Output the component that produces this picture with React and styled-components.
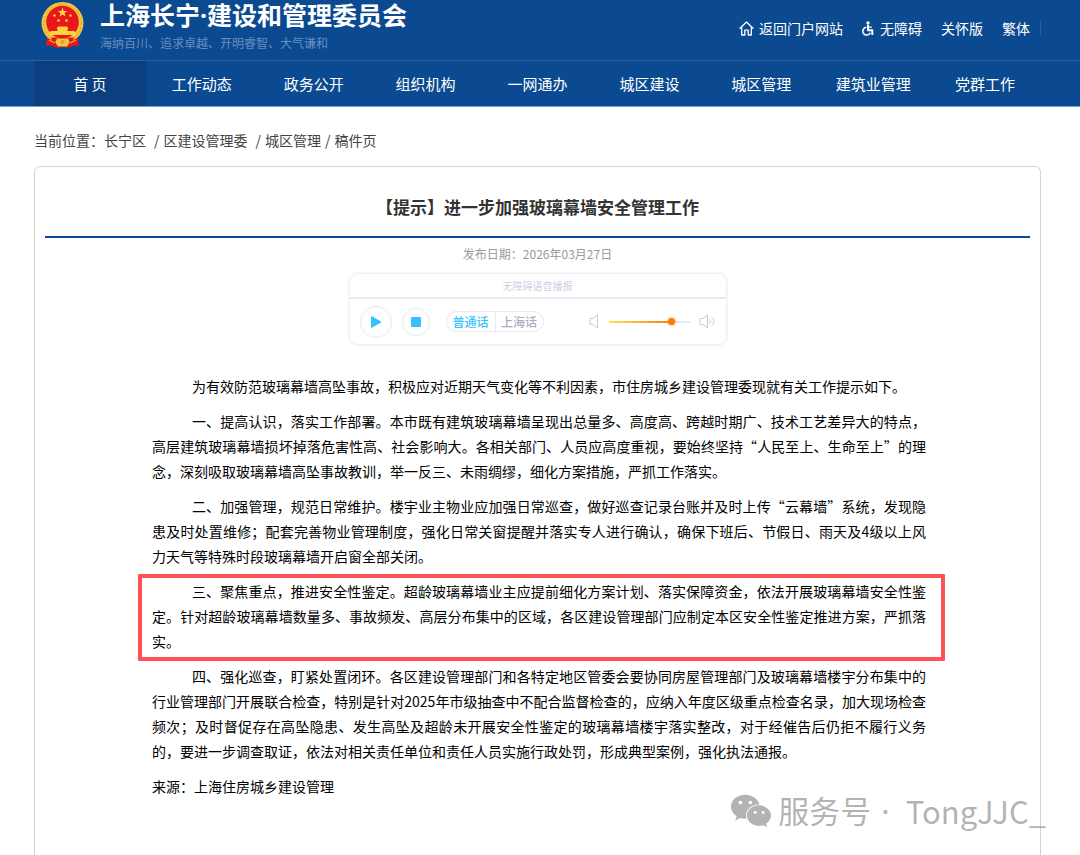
import React, { useState } from 'react'
import styled, { createGlobalStyle, ThemeProvider } from 'styled-components'
import { FaWeixin } from 'react-icons/fa'

const theme = {
  color: {
    primary: '#0b4a90',
    primaryDark: '#0b3f7f',
    line: '#28609f',
    text: '#000',
    muted: '#999',
    accent: '#35c3ff',
    frame: '#e9e8f3',
    mark: '#ff5257',
  },
  font: {
    xs: '10px',
    sm: '12px',
    md: '14px',
    nav: '15px',
    lg: '17px',
    xl: '25px',
  },
}

const GlobalStyle = createGlobalStyle`
  * {
    box-sizing: border-box;
  }
  body {
    margin: 0;
    background: #fff;
    color: ${theme.color.text};
    font-family: "Noto Sans CJK SC", sans-serif;
    font-size: ${theme.font.md};
  }
  a {
    color: inherit;
    text-decoration: none;
  }
  button {
    padding: 0;
    font-family: inherit;
    cursor: pointer;
  }
`

const Page = styled.div`
  position: relative;
  display: flex;
  flex-direction: column;
  min-height: 100vh;
`

const Header = styled.header`
  background: ${props => props.theme.color.primary};
  border-bottom: 1px solid #7b9cc4;
  color: #fff;
`

const Container = styled.div`
  padding: 0 39px 0 34px;
`

const TopBar = styled(Container)`
  display: flex;
  justify-content: space-between;
  height: 61px;
  border-bottom: 1px solid ${props => props.theme.color.line};
`

const Brand = styled.div`
  display: flex;
  gap: 16px;
  padding-left: 7px;
`

const Emblem = styled.svg`
  width: 43px;
  height: 48px;
  margin-top: 1px;
`

const SiteName = styled.h1`
  margin: 0;
  font-family: "Noto Sans", "Noto Sans CJK SC", sans-serif;
  font-size: ${props => props.theme.font.xl};
  font-weight: 700;
  line-height: 30px;
  white-space: nowrap;
`

const Slogan = styled.p`
  margin: 4px 0 0;
  color: #6890c0;
  font-size: ${props => props.theme.font.sm};
  line-height: 18px;
`

const Tools = styled.ul`
  display: flex;
  align-items: center;
  gap: 19px;
  margin: 0;
  padding: 0 0 4px;
  list-style: none;
  line-height: 20px;
  white-space: nowrap;

  a {
    display: flex;
    align-items: center;
    gap: 5px;
  }
  li:last-child {
    padding-right: 10px;
    border-right: 1px solid ${props => props.theme.color.line};
    line-height: 14px;
  }
`

const Nav = styled.nav`
  display: grid;
  grid-template-columns: repeat(9, 1fr);
`

const NavLink = styled.a`
  background: ${props => props.$active ? props.theme.color.primaryDark : 'transparent'};
  font-size: ${props => props.theme.font.nav};
  line-height: 45px;
  text-align: center;
`

const Breadcrumb = styled.nav`
  padding: 21px 0 14px;
  color: #444;
  line-height: 24px;
`

const Separator = styled.span`
  padding: 0 4px 0 ${props => props.$tight ? 4 : 8}px;
`

const Main = styled(Container)`
  display: flex;
  flex: 1;
  flex-direction: column;
`

const Card = styled.article`
  flex: 1;
  padding: 0 10px 40px;
  border: 1px solid #d4d4d4;
  border-bottom: 0;
  border-radius: 6px 6px 0 0;
`

const Title = styled.h2`
  margin: 0;
  padding: 27px 0 17px;
  border-bottom: 2px solid ${props => props.theme.color.primary};
  color: #333;
  font-size: ${props => props.theme.font.lg};
  line-height: 25px;
  text-align: center;
`

const PublishDate = styled.p`
  margin: 6px 0 9px;
  color: ${props => props.theme.color.muted};
  font-size: ${props => props.theme.font.sm};
  line-height: 20px;
  text-align: center;
`

const Player = styled.section`
  max-width: 378px;
  margin: 0 auto;
  border: 1px solid #f1f1f5;
  border-radius: 9px;
  box-shadow: 0 0 3px #e8e8ec;
`

const PlayerTitle = styled.div`
  border-bottom: 2px solid ${props => props.theme.color.frame};
  color: #cfcfe0;
  font-size: ${props => props.theme.font.xs};
  line-height: 23px;
  text-align: center;
`

const Controls = styled.div`
  display: flex;
  align-items: center;
  height: 45px;
  padding: 0 10px;
`

const RoundButton = styled.button`
  display: grid;
  place-items: center;
  width: ${props => props.$size}px;
  height: ${props => props.$size}px;
  margin-right: 10px;
  border: 1px solid ${props => props.theme.color.frame};
  border-radius: 50%;
  background: #fff;
  color: ${props => props.theme.color.accent};
`

const Dialects = styled.div`
  display: flex;
  margin-left: 6px;
  border: 1px solid ${props => props.theme.color.frame};
  border-radius: 11px;
`

const DialectButton = styled.button`
  width: 48px;
  border: 0;
  background: none;
  color: ${props => props.$active ? props.theme.color.accent : '#a9abc0'};
  font-size: ${props => props.theme.font.sm};
  font-weight: 500;
  line-height: 19px;

  & + & {
    border-left: 1px solid ${props => props.theme.color.frame};
  }
`

const Volume = styled.div`
  display: flex;
  flex: 1;
  align-items: center;
  justify-content: flex-end;
  gap: 9px;
  color: #c9c9d4;
`

const VolumeRange = styled.input`
  width: 81px;
  height: 16px;
  margin: 0;
  appearance: none;
  background: none;

  &::-webkit-slider-runnable-track {
    height: 2px;
    background: linear-gradient(
      to right,
      #ffdf5a,
      #ff7a00 ${props => props.value}%,
      ${props => props.theme.color.frame} ${props => props.value}%
    );
  }
  &::-webkit-slider-thumb {
    width: 7px;
    height: 7px;
    margin-top: -3px;
    appearance: none;
    border-radius: 50%;
    background: #ff7a00;
    box-shadow: 0 0 3px #ff9a3c;
  }
`

const Content = styled.div`
  max-width: 985px;
  padding: 29px 104px 0 107px;
`

const Paragraph = styled.p`
  position: relative;
  margin: 0 0 10px;
  line-height: 25px;
  text-align: justify;
  text-indent: ${props => props.$flush ? 0 : '40px'};
`

const Marked = styled(Paragraph)`
  &::after {
    content: "";
    position: absolute;
    inset: -5px -19px -7px -14px;
    border: 4px solid ${props => props.theme.color.mark};
    border-radius: 1px;
  }
`

const Watermark = styled.div`
  position: absolute;
  right: 34px;
  bottom: 22px;
  display: flex;
  align-items: center;
  gap: 6px;
  color: rgba(120, 120, 120, 0.56);
  font-size: 31px;
  line-height: 44px;
  white-space: nowrap;
`

const Dot = styled.span`
  padding: 0 10px;
  font-family: "Noto Sans", sans-serif;
`

const navItems = [
  '首 页',
  '工作动态',
  '政务公开',
  '组织机构',
  '一网通办',
  '城区建设',
  '城区管理',
  '建筑业管理',
  '党群工作',
]

const NationalEmblem = () => (
  <Emblem viewBox="0 0 43 48" aria-hidden="true">
    <path d="M7 34 5.500 44.500l6 .5 4 2 6-1 6 1 4-2 6-.500L36 34z" fill="#d8161b" />
    <circle cx="21.500" cy="22" r="21" fill="#f2c53c" />
    <circle cx="21.500" cy="22" r="18.800" fill="none" stroke="#dba42a" strokeWidth="1" strokeDasharray="2 2" />
    <circle cx="21.500" cy="21" r="16.300" fill="#e8161d" />
    <path d="m21.500 6.500 1.200 3.400h3.600l-2.900 2.200 1.100 3.500-3-2.100-3 2.100 1.100-3.500-2.900-2.200h3.600z" fill="#ffe04a" />
    <g fill="#ffd43a">
      <circle cx="13.500" cy="14.500" r="1.300" />
      <circle cx="29.500" cy="14.500" r="1.300" />
      <circle cx="17.500" cy="19.500" r="1.300" />
      <circle cx="25.500" cy="19.500" r="1.300" />
      <path d="M17 25.500h9l1.500 2.500h-1v2H33l2 1.500V34H8v-2.500l2-1.500h6.500v-2h-1z" />
    </g>
    <path d="M10 36.500h23l-2 5H12z" fill="#e8161d" />
    <path d="M16 37.500h11l2 4-3 4h-9l-3-4z" fill="#f2c53c" />
    <circle cx="21.500" cy="41" r="2" fill="#e0a024" />
    <path d="m6 37 8 3 2 5-4-1-6.500.500zM37 37l-8 3-2 5 4-1 6.500.500z" fill="#e31b20" />
    <path d="m8 39 6 3M35 39l-6 3" stroke="#f5c83a" strokeWidth="1" />
  </Emblem>
)

const HomeIcon = () => (
  <svg width="15" height="15" viewBox="0 0 15 15" fill="none" stroke="currentColor" strokeWidth="1.300" strokeLinejoin="round" strokeLinecap="round" aria-hidden="true">
    <path d="M1 7.200 7.500 1 14 7.200M2.700 6v8h3.100V9.200h3.400V14h3.100V6" />
  </svg>
)

const WheelchairIcon = () => (
  <svg width="13" height="15" viewBox="0 0 13 15" fill="none" stroke="currentColor" strokeLinejoin="round" aria-hidden="true">
    <circle cx="6" cy="2" r="1.700" fill="currentColor" stroke="none" />
    <path d="M6 4v5.200h4.300V14" strokeWidth="2" />
    <path d="M6 6.200h3.800" strokeWidth="1.300" />
    <path d="M4.300 6.300a3.900 3.900 0 1 0 4 5.500" strokeWidth="1.500" />
  </svg>
)

const SpeakerIcon = ({ waves }) => (
  <svg width={waves ? 17 : 11} height="15" viewBox={waves ? '0 0 17 15' : '0 0 11 15'} fill="none" stroke="currentColor" strokeWidth="1" strokeLinejoin="round" aria-hidden="true">
    <path d="M1 4.500h3l4.500-3.500v13L4 10.500H1z" />
    {waves && <path d="M10.500 5.500q1.800 2 0 4M13 3.500q4 4 0 8" />}
  </svg>
)

const AudioPlayer = () => {
  const [dialect, setDialect] = useState('普通话')
  const [volume, setVolume] = useState(80)
  return (
    <Player>
      <PlayerTitle>无障碍语音播报</PlayerTitle>
      <Controls>
        <RoundButton $size={32} aria-label="播放">
          <svg width="12" height="14" viewBox="0 0 12 14">
            <path d="M1.500 1.500 11 7l-9.500 5.500z" fill="currentColor" stroke="currentColor" strokeLinejoin="round" />
          </svg>
        </RoundButton>
        <RoundButton $size={28} aria-label="停止">
          <svg width="10" height="10" viewBox="0 0 10 10">
            <rect width="10" height="10" rx="1" fill="currentColor" />
          </svg>
        </RoundButton>
        <Dialects>
          {['普通话', '上海话'].map(name => (
            <DialectButton key={name} $active={name === dialect} onClick={() => setDialect(name)}>
              {name}
            </DialectButton>
          ))}
        </Dialects>
        <Volume>
          <SpeakerIcon />
          <VolumeRange
            type="range"
            aria-label="音量"
            value={volume}
            onChange={e => setVolume(e.target.value)}
          />
          <SpeakerIcon waves />
        </Volume>
      </Controls>
    </Player>
  )
}

const App = () => (
  <ThemeProvider theme={theme}>
    <GlobalStyle />
    <Page lang="zh-CN">
      <Header>
        <TopBar>
          <Brand>
            <NationalEmblem />
            <div>
              <SiteName>上海长宁·建设和管理委员会</SiteName>
              <Slogan>海纳百川、追求卓越、开明睿智、大气谦和</Slogan>
            </div>
          </Brand>
          <Tools>
            <li><a href="#portal"><HomeIcon />返回门户网站</a></li>
            <li><a href="#accessible"><WheelchairIcon />无障碍</a></li>
            <li><a href="#care">关怀版</a></li>
            <li><a href="#traditional">繁体</a></li>
          </Tools>
        </TopBar>
        <Container>
          <Nav>
            {navItems.map((item, i) => (
              <NavLink key={item} href="#nav" $active={i === 0}>{item}</NavLink>
            ))}
          </Nav>
        </Container>
      </Header>
      <Main as="main">
        <Breadcrumb>
          当前位置：<a href="#changning">长宁区</a>
          <Separator>/</Separator>
          <a href="#committee">区建设管理委</a>
          <Separator>/</Separator>
          <a href="#manage">城区管理</a>
          <Separator $tight>/</Separator>
          稿件页
        </Breadcrumb>
        <Card>
          <Title>【提示】进一步加强玻璃幕墙安全管理工作</Title>
          <PublishDate>发布日期：2026年03月27日</PublishDate>
          <AudioPlayer />
          <Content>
            <Paragraph>
              为有效防范玻璃幕墙高坠事故，积极应对近期天气变化等不利因素，市住房城乡建设管理委现就有关工作提示如下。
            </Paragraph>
            <Paragraph>
              一、提高认识，落实工作部署。本市既有建筑玻璃幕墙呈现出总量多、高度高、跨越时期广、技术工艺差异大的特点，高层建筑玻璃幕墙损坏掉落危害性高、社会影响大。各相关部门、人员应高度重视，要始终坚持“人民至上、生命至上”的理念，深刻吸取玻璃幕墙高坠事故教训，举一反三、未雨绸缪，细化方案措施，严抓工作落实。
            </Paragraph>
            <Paragraph>
              二、加强管理，规范日常维护。楼宇业主物业应加强日常巡查，做好巡查记录台账并及时上传“云幕墙”系统，发现隐患及时处置维修；配套完善物业管理制度，强化日常关窗提醒并落实专人进行确认，确保下班后、节假日、雨天及4级以上风力天气等特殊时段玻璃幕墙开启窗全部关闭。
            </Paragraph>
            <Marked>
              三、聚焦重点，推进安全性鉴定。超龄玻璃幕墙业主应提前细化方案计划、落实保障资金，依法开展玻璃幕墙安全性鉴定。针对超龄玻璃幕墙数量多、事故频发、高层分布集中的区域，各区建设管理部门应制定本区安全性鉴定推进方案，严抓落实。
            </Marked>
            <Paragraph>
              四、强化巡查，盯紧处置闭环。各区建设管理部门和各特定地区管委会要协同房屋管理部门及玻璃幕墙楼宇分布集中的行业管理部门开展联合检查，特别是针对2025年市级抽查中不配合监督检查的，应纳入年度区级重点检查名录，加大现场检查频次；及时督促存在高坠隐患、发生高坠及超龄未开展安全性鉴定的玻璃幕墙楼宇落实整改，对于经催告后仍拒不履行义务的，要进一步调查取证，依法对相关责任单位和责任人员实施行政处罚，形成典型案例，强化执法通报。
            </Paragraph>
            <Paragraph $flush>来源：上海住房城乡建设管理</Paragraph>
          </Content>
        </Card>
      </Main>
      <Watermark>
        <FaWeixin size={42} />
        <span>服务号<Dot>·</Dot></span>
        <span>TongJJC_</span>
      </Watermark>
    </Page>
  </ThemeProvider>
)

export default App
